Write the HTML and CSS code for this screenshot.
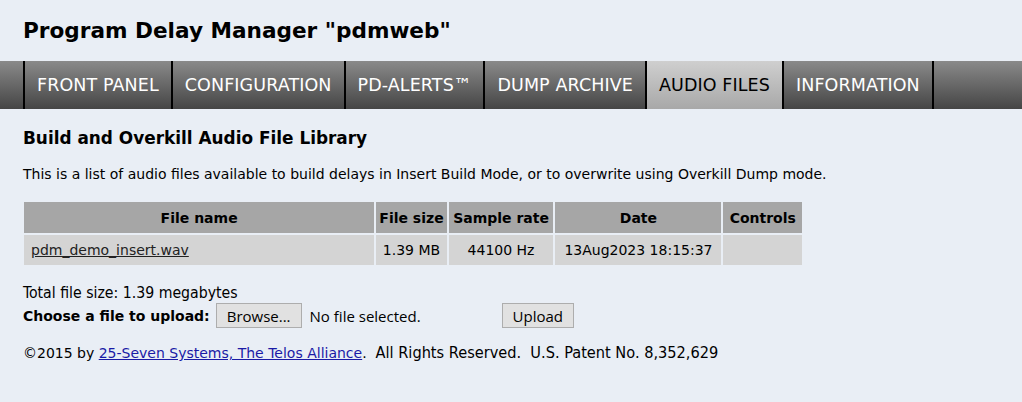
FILE: index.html
```html
<!DOCTYPE html>
<html lang="en">
  <head>
    <meta charset="UTF-8" />
    <title>Program Delay Manager</title>
    <link rel="stylesheet" href="styles.css">
  </head>
  <body>
    <h1 class="title">Program Delay Manager "pdmweb"</h1>

    <!-- Main navigation -->
    <div class="nav">
      <a class="tab" href="#">FRONT PANEL</a>
      <a class="tab" href="#">CONFIGURATION</a>
      <a class="tab" href="#">PD-ALERTS&trade;</a>
      <a class="tab" href="#">DUMP ARCHIVE</a>
      <a class="tab active" href="#">AUDIO FILES</a>
      <a class="tab last" href="#">INFORMATION</a>
    </div>

    <div class="content">
      <h2 class="heading">Build and Overkill Audio File Library</h2>
      <p class="intro">This is a list of audio files available to build delays in Insert Build Mode, or to overwrite using Overkill Dump mode.</p>

      <table class="files">
        <tr>
          <th class="c-name">File name</th>
          <th class="c-size">File size</th>
          <th class="c-rate">Sample rate</th>
          <th class="c-date">Date</th>
          <th class="c-ctrl">Controls</th>
        </tr>
        <tr>
          <td class="left"><a href="#">pdm_demo_insert.wav</a></td>
          <td>1.39 MB</td>
          <td>44100 Hz</td>
          <td>13Aug2023 18:15:37</td>
          <td></td>
        </tr>
      </table>

      <div class="total">Total file size: 1.39 megabytes</div>
      <form class="upload">
        <b class="upload-label">Choose a file to upload:</b>
        <button type="button" class="btn">Browse...</button>
        <span class="nofile">No file selected.</span>
        <button type="button" class="btn">Upload</button>
      </form>

      <p class="footer">&copy;2015 by <a href="#">25-Seven Systems, The Telos Alliance</a>.&nbsp; <span class="narrow">All Rights Reserved.&nbsp; U.S. Patent No. 8,352,629</span></p>
    </div>
  </body>
</html>
```

FILE: styles.css
```css
body {
  font-family: "DejaVu Sans", Verdana, sans-serif;
  background-color: #e9eef5;
  color: #000;
  margin: 0;
  padding: 0;
}

.title {
  font-size: 21.6px;
  font-weight: bold;
  margin: 0;
  padding: 18px 23px 18px;
}

/* Navigation bar */
.nav {
  display: flex;
  height: 48px;
  padding-left: 23px;
  background: linear-gradient(#8a8a8a, #454545);
}

.tab {
  display: flex;
  align-items: center;
  padding: 0 12px;
  border-left: 2px solid #000;
  color: #fff;
  font-size: 17.5px;
  letter-spacing: 0.1px;
  text-decoration: none;
}

.tab.active {
  background: linear-gradient(#cfcfcf, #a8a8a8);
  color: #000;
}

.tab.last {
  border-right: 2px solid #000;
}

.content {
  padding: 0 23px;
}

.heading {
  font-size: 16.9px;
  font-weight: bold;
  margin: 19px 0 18px;
}

.intro {
  font-size: 14px;
  margin: 0 0 18px;
}

/* File table */
.files {
  table-layout: fixed;
  width: 782px;
  border-spacing: 2px;
  margin-left: -1px;
  font-size: 14px;
}

.files th {
  background-color: #a6a6a6;
  height: 31px;
  padding: 0;
}

.files td {
  background-color: #d4d4d4;
  height: 30px;
  padding: 0;
  text-align: center;
}

.files td.left {
  text-align: left;
  padding-left: 7px;
}

.files a {
  color: #222;
}

.c-name { width: 348px; }
.c-size { width: 70px; }
.c-rate { width: 104px; }
.c-date { width: 165px; }
.c-ctrl { width: 78px; }

.total {
  margin-top: 17px;
  font-family: "DejaVu Sans Condensed", "DejaVu Sans", sans-serif;
  font-stretch: condensed;
  font-size: 15.7px;
  line-height: 18px;
}

.upload {
  display: flex;
  align-items: center;
  margin-top: 1px;
}

.upload-label {
  font-size: 14px;
  margin-right: 6px;
}

.btn {
  font-family: "Open Sans", sans-serif;
  font-size: 15px;
  background-color: #e1e1e1;
  border: 1px solid #adadad;
  padding: 0 10px;
  height: 25px;
}

.nofile {
  font-family: "Open Sans", sans-serif;
  font-size: 15px;
  margin-left: 8px;
  width: 192px;
}

.footer {
  font-size: 14px;
  margin: 15px 0 0;
}

.footer a {
  color: #1a1aa6;
}

.narrow {
  font-family: "DejaVu Sans Condensed", "DejaVu Sans", sans-serif;
  font-stretch: condensed;
  font-size: 16.2px;
}
```
